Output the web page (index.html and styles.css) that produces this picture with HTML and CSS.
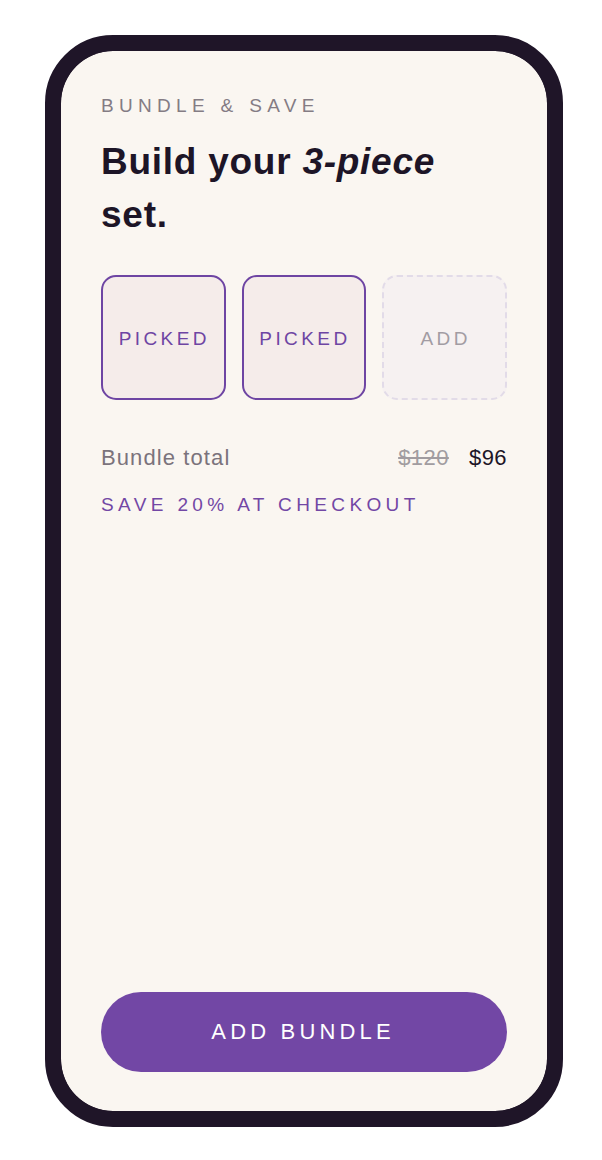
FILE: index.html
```html
<!DOCTYPE html>
<html lang="en">
<head>
  <meta charset="UTF-8">
  <meta name="viewport" content="width=device-width, initial-scale=1.0">
  <title>Bundle &amp; Save</title>
  <link rel="stylesheet" href="styles.css">
</head>
<body>

  <div class="phone">
    <div class="screen">
      <div class="eyebrow">Bundle &amp; Save</div>
      <h1>Build your <em>3-piece</em> set.</h1>

      <div class="slots">
        <div class="slot picked">Picked</div>
        <div class="slot picked">Picked</div>
        <div class="slot empty">Add</div>
      </div>

      <div class="total">
        <span class="label">Bundle total</span>
        <span class="prices">
          <s class="old">$120</s>
          <span class="new">$96</span>
        </span>
      </div>
      <div class="note">Save 20% at checkout</div>

      <button class="cta">Add bundle</button>
    </div>
  </div>

</body>
</html>
```

FILE: styles.css
```css
body {
  margin: 0;
  padding: 35px 0 0 45px;
  background: #fff;
  font-family: "Liberation Sans", Arial, sans-serif;
}
.phone {
  width: 518px;
  height: 1092px;
  box-sizing: border-box;
  border: 16px solid #1f1528;
  border-radius: 68px;
  background: #1f1528;
  overflow: hidden;
}
.screen {
  height: 100%;
  box-sizing: border-box;
  padding: 44px 40px 39px;
  background: #faf6f1;
  border-radius: 52px;
  display: flex;
  flex-direction: column;
}
.eyebrow {
  font-size: 19px;
  letter-spacing: 0.28em;
  text-transform: uppercase;
  color: #847c84;
  line-height: 22px;
}
h1 {
  margin: 18px 0 0;
  max-width: 370px;
  font-size: 37px;
  font-weight: bold;
  line-height: 53px;
  letter-spacing: 0.02em;
  color: #1d1527;
}
h1 em {
  font-style: italic;
}
.slots {
  display: grid;
  grid-template-columns: repeat(3, 1fr);
  gap: 16px;
  margin-top: 34px;
}
.slot {
  height: 125px;
  box-sizing: border-box;
  border-radius: 15px;
  display: flex;
  align-items: center;
  justify-content: center;
  font-size: 19px;
  letter-spacing: 0.18em;
  text-transform: uppercase;
  padding: 2px 0 0 0.1em;
}
.picked {
  border: 2px solid #6e45a3;
  background: #f5ecea;
  color: #6e45a3;
}
.empty {
  border: 2px dashed #e2dbe8;
  background: #f6f1f1;
  color: #a29ca3;
}
.total {
  display: flex;
  justify-content: space-between;
  align-items: baseline;
  margin-top: 42px;
  font-size: 22px;
  line-height: 32px;
}
.label {
  color: #7b737c;
  letter-spacing: 0.05em;
}
.old {
  color: #a19ca0;
  margin-right: 14px;
  letter-spacing: 0.02em;
}
.new {
  color: #1d1527;
  letter-spacing: 0.02em;
}
.note {
  margin-top: 20px;
  font-size: 19px;
  letter-spacing: 0.23em;
  text-transform: uppercase;
  color: #7247a5;
}
.cta {
  margin-top: auto;
  height: 80px;
  border: 0;
  border-radius: 40px;
  background: #7247a5;
  color: #fff;
  font-family: inherit;
  font-size: 22px;
  letter-spacing: 0.19em;
  padding-left: 0.19em;
  text-transform: uppercase;
  cursor: pointer;
}
```
